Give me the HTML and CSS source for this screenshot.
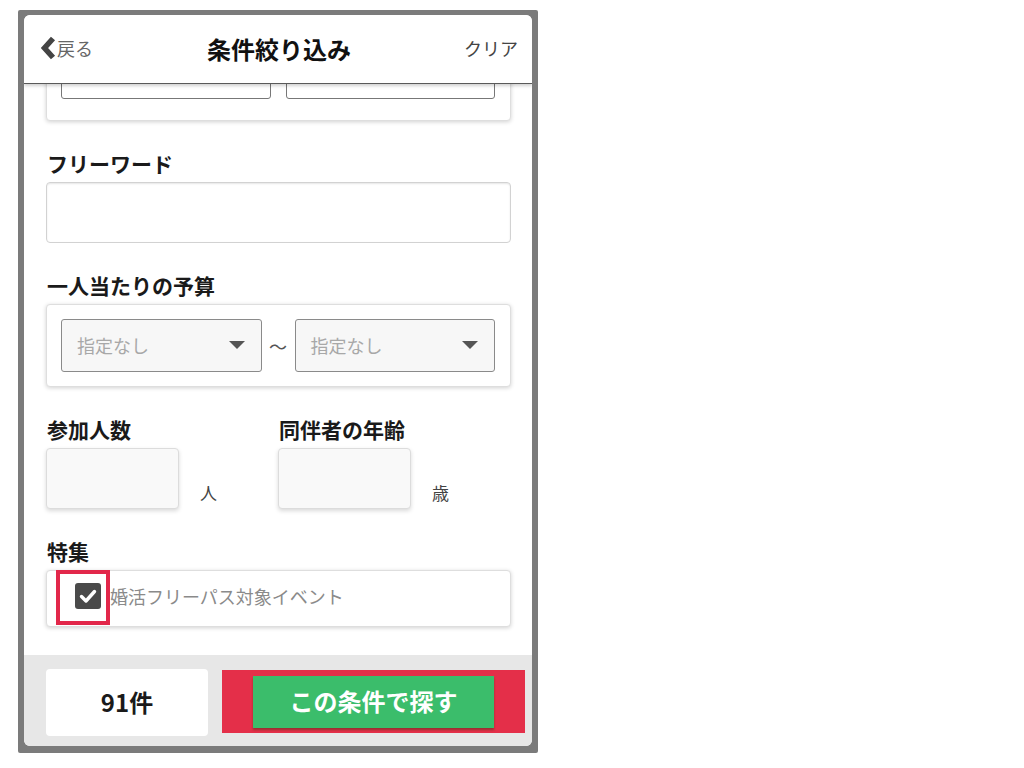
FILE: index.html
```html
<!DOCTYPE html>
<html lang="ja">
<head>
    <meta charset="UTF-8">
    <meta name="viewport" content="width=device-width, initial-scale=1.0">
    <title>条件絞り込み</title>
    <link rel="stylesheet" href="styles.css">
</head>
<body>
<div class="frame">
  <div class="screen">

    <div class="header">
        <a class="back">
            <svg width="16" height="24" viewBox="0 0 16 24"><path d="M13 2.5 L4.5 12 L13 21.5" fill="none" stroke="#444" stroke-width="5.5" stroke-linejoin="miter"/></svg>
            <span>戻る</span>
        </a>
        <h1 class="title">条件絞り込み</h1>
        <a class="clear">クリア</a>
    </div>

    <div class="content">
        <div class="card top-card">
            <div class="field dark"></div>
            <div class="field dark"></div>
        </div>

        <p class="label">フリーワード</p>
        <input class="text-input" type="text">

        <p class="label">一人当たりの予算</p>
        <div class="card budget">
            <div class="select"><span>指定なし</span><i class="arrow"></i></div>
            <span class="tilde">〜</span>
            <div class="select"><span>指定なし</span><i class="arrow"></i></div>
        </div>

        <div class="pair">
            <div>
                <p class="label">参加人数</p>
                <div class="unit-row">
                    <input class="small-input" type="text">
                    <span class="unit">人</span>
                </div>
            </div>
            <div>
                <p class="label">同伴者の年齢</p>
                <div class="unit-row">
                    <input class="small-input" type="text">
                    <span class="unit">歳</span>
                </div>
            </div>
        </div>

        <p class="label">特集</p>
        <div class="card special">
            <span class="mark">
                <span class="checkbox">
                    <svg width="26" height="26" viewBox="0 0 26 26"><path d="M6.5 13.5 L11 18 L19.5 8.5" fill="none" stroke="#fff" stroke-width="3.4" stroke-linecap="round" stroke-linejoin="round"/></svg>
                </span>
            </span>
            <span class="special-text">婚活フリーパス対象イベント</span>
        </div>
    </div>

    <div class="footer">
        <div class="count">91件</div>
        <div class="search-mark">
            <button class="search">この条件で探す</button>
        </div>
    </div>

  </div>
</div>
</body>
</html>
```

FILE: styles.css
```css
* {
    box-sizing: border-box;
}
body {
    margin: 0;
    padding: 10px 0 0 18px;
    background: #fff;
    font-family: "Noto Sans CJK JP", "Noto Sans", sans-serif;
    color: #222;
}
p {
    margin: 0;
}

.frame {
    width: 520px;
    height: 743px;
    background: #7b7b7b;
    padding: 5px 6px 7px 6px;
    border-radius: 2px;
}
.screen {
    height: 731px;
    background: #fff;
    border-radius: 6px;
    overflow: hidden;
    display: flex;
    flex-direction: column;
}

/* header */
.header {
    position: relative;
    z-index: 2;
    height: 69px;
    flex: none;
    background: #fff;
    border-bottom: 1px solid #5a5a5a;
    box-shadow: 0 2px 3px rgba(0, 0, 0, 0.18);
    display: flex;
    align-items: center;
    justify-content: space-between;
    padding: 0 14px 2px 16px;
}
.back {
    display: flex;
    align-items: center;
    font-size: 18px;
    color: #666;
    width: 90px;
}
.back svg {
    margin-right: 1px;
}
.title {
    margin: 0;
    font-size: 24px;
    font-weight: 700;
    color: #111;
}
.clear {
    width: 90px;
    text-align: right;
    font-size: 18px;
    color: #444;
}

/* content */
.content {
    flex: 1;
    overflow: hidden;
    padding: 0 21px 0 22px;
}
.card {
    background: #fff;
    border: 1px solid #dedede;
    border-radius: 4px;
    box-shadow: 0 1px 4px rgba(0, 0, 0, 0.18);
}
.top-card {
    margin-top: -49px;
    height: 86px;
    padding: 13px 15px 0 14px;
    display: grid;
    grid-template-columns: 1fr 1fr;
    gap: 15px;
}
.field.dark {
    height: 50px;
    border: 1px solid #777;
    border-radius: 3px;
}

.label {
    font-size: 21px;
    font-weight: 700;
    line-height: 26px;
    margin: 29px 0 6px 1px;
    color: #1a1a1a;
}
.text-input {
    display: block;
    width: 100%;
    height: 61px;
    border: 1px solid #d2d2d2;
    border-radius: 4px;
    box-shadow: inset 0 1px 2px rgba(0, 0, 0, 0.1);
    background: #fff;
}

.budget {
    height: 83px;
    display: flex;
    align-items: center;
    padding: 0 15px 0 14px;
}
.select {
    flex: 1;
    height: 53px;
    border: 1px solid #8a8a8a;
    border-radius: 3px;
    background: #f7f7f7;
    display: flex;
    align-items: center;
    justify-content: space-between;
    padding: 0 16px 2px 15px;
    font-size: 18px;
    color: #a8a8a8;
}
.arrow {
    width: 0;
    height: 0;
    border-left: 8px solid transparent;
    border-right: 8px solid transparent;
    border-top: 8px solid #555;
}
.tilde {
    width: 33px;
    text-align: center;
    font-size: 18px;
    color: #555;
}

.pair {
    display: grid;
    grid-template-columns: 232px 1fr;
}
.unit-row {
    display: flex;
    align-items: flex-end;
}
.small-input {
    width: 133px;
    height: 61px;
    border: 1px solid #dcdcdc;
    border-radius: 4px;
    background: #f9f9f9;
    box-shadow: 0 2px 4px rgba(0, 0, 0, 0.15);
}
.unit {
    margin-left: 21px;
    padding-bottom: 5px;
    font-size: 17px;
    line-height: 22px;
    color: #444;
}

.special {
    height: 57px;
    display: flex;
    align-items: flex-start;
    padding-left: 9px;
}
.mark {
    margin-top: -1px;
    width: 54px;
    height: 55px;
    border: 4px solid #e2274a;
    padding: 9px 0 0 15px;
}
.checkbox {
    display: block;
    width: 26px;
    height: 26px;
    border-radius: 3px;
    background: #4a4a4a;
}
.special-text {
    align-self: center;
    font-size: 18px;
    color: #8a8a8a;
    margin-top: -5px;
}

/* footer */
.footer {
    height: 91px;
    flex: none;
    background: #e7e7e7;
    display: flex;
    align-items: flex-start;
    padding: 14px 7px 0 22px;
}
.count {
    width: 162px;
    height: 67px;
    background: #fff;
    border-radius: 4px;
    display: flex;
    align-items: center;
    justify-content: center;
    font-size: 24px;
    font-weight: 700;
    color: #1a1a1a;
    padding-bottom: 2px;
}
.search-mark {
    margin: 1px 0 0 14px;
    width: 303px;
    height: 63px;
    background: #e42f49;
    padding: 6px 31px 0 31px;
}
.search {
    display: block;
    width: 241px;
    height: 52px;
    border: none;
    background: #3bbd6b;
    color: #fff;
    font-family: inherit;
    font-size: 24px;
    font-weight: 700;
    padding: 0 0 3px;
    box-shadow: 0 2px 2px rgba(60, 50, 20, 0.45);
}
```
